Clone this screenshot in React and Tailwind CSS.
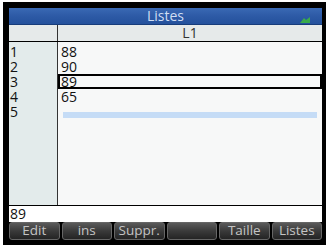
import React from "react";

const rows = [
  { n: "1", v: "88" },
  { n: "2", v: "90" },
  { n: "3", v: "89", sel: true },
  { n: "4", v: "65" },
  { n: "5", v: "", edit: true },
];

const buttons = ["Edit", "ins", "Suppr.", "", "Taille", "Listes"];

export default function App() {
  return (
    <div
      className="w-[329px] h-[248px] bg-white pt-[2px] pl-[3px] overflow-hidden"
      style={{ fontFamily: "'Open Sans', 'DejaVu Sans', sans-serif" }}
    >
      <div className="w-[323px] h-[243px] bg-black pt-[6px] pl-[6px] pr-[4px] pb-[5px]">
        <div className="w-[313px] h-[232px] flex flex-col">
          {/* Title bar */}
          <div className="relative h-[17px] shrink-0 bg-gradient-to-b from-[#3a69b4] via-[#2d5aa6] to-[#24519c] border-b border-[#173c7a] flex items-center justify-center">
            <span className="text-[14px] leading-none text-[#d0def3]">Listes</span>
            <svg
              className="absolute right-[12px] top-[9px]"
              width="10"
              height="6"
              viewBox="0 0 10 6"
            >
              <path d="M0 6 L4 1 L6 3 L10 0 L10 6 Z" fill="#3dbb3d" opacity="0.85" />
            </svg>
          </div>
          {/* Header row */}
          <div className="flex h-[17px] shrink-0 bg-[#e6eaea] border-b border-black">
            <div className="w-[49px] border-r border-[#333]" />
            <div className="flex-1 flex items-center justify-center text-[14px] leading-none text-[#333]">
              L1
            </div>
          </div>
          {/* List area */}
          <div className="flex-1 flex border-b border-black">
            <div className="w-[49px] bg-[#e3ebeb] border-r border-[#333] pt-[2px]">
              {rows.map((r) => (
                <div
                  key={r.n}
                  className="h-[15px] pl-[1px] flex items-center text-[14px] leading-[15px] text-[#111]"
                >
                  {r.n}
                </div>
              ))}
            </div>
            <div className="flex-1 bg-[#f7f8f8] pt-[2px]">
              {rows.map((r) => (
                <div
                  key={r.n}
                  className={
                    r.sel
                      ? "h-[15px] border-2 border-black pl-[1px] flex items-center text-[14px] leading-[11px] text-[#111]"
                      : "h-[15px] pl-[3px] flex items-center text-[14px] leading-[15px] text-[#111]"
                  }
                >
                  {r.edit ? (
                    <div className="ml-[2px] mr-[5px] mt-[6px] h-[6px] flex-1 bg-[#c5dcf6]" />
                  ) : (
                    r.v
                  )}
                </div>
              ))}
            </div>
          </div>
          {/* Edit line */}
          <div className="h-[16px] shrink-0 bg-white flex items-center pl-[1px] text-[14px] leading-none text-[#111]">
            89
          </div>
          {/* Soft buttons */}
          <div className="h-[18px] shrink-0 flex gap-[2px] bg-black">
            {buttons.map((b, i) => (
              <div
                key={i}
                className="flex-1 rounded-[3px] bg-gradient-to-b from-[#5a5a5a] via-[#3a3a3a] to-[#242424] border border-[#666] flex items-center justify-center text-[13.5px] font-medium leading-none text-[#c4c4c4]"
              >
                {b}
              </div>
            ))}
          </div>
        </div>
      </div>
    </div>
  );
}
